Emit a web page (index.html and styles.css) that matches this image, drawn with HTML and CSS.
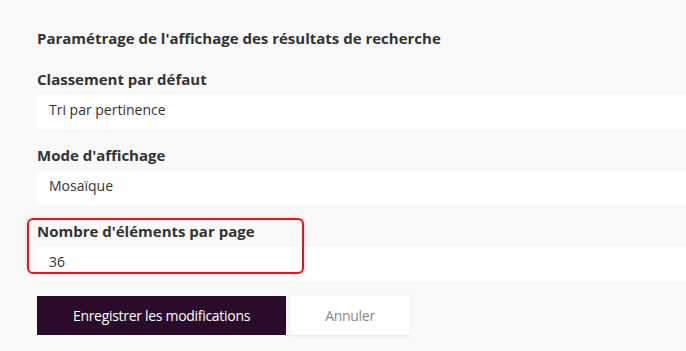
FILE: index.html
```html
<!DOCTYPE html>
<html lang="fr">
<head>
<meta charset="utf-8">
<link rel="stylesheet" href="styles.css">
</head>
<body>
<div class="panel">
  <h2 class="title">Paramétrage de l'affichage des résultats de recherche</h2>
  <div class="group">
    <div class="label">Classement par défaut</div>
    <div class="field">Tri par pertinence</div>
  </div>
  <div class="group">
    <div class="label">Mode d'affichage</div>
    <div class="field">Mosaïque</div>
  </div>
  <div class="group highlighted">
    <div class="label">Nombre d'éléments par page</div>
    <div class="field">36</div>
    <div class="marker"></div>
  </div>
  <div class="actions">
    <button class="btn btn-primary">Enregistrer les modifications</button>
    <button class="btn btn-secondary">Annuler</button>
  </div>
</div>
</body>
</html>
```
FILE: styles.css
```css
html, body {
  margin: 0;
  padding: 0;
  background: #f9f9f9;
}
body {
  font-family: "Open Sans", "Noto Sans", sans-serif;
  color: #333;
  width: 686px;
  height: 351px;
  overflow: hidden;
}
.panel {
  padding: 28px 0 0 37px;
}
.title {
  margin: 0;
  font-size: 15px;
  line-height: 20px;
  font-weight: 700;
  color: #333;
}
.group {
  position: relative;
  margin-top: 21px;
}
.group + .group {
  margin-top: 16px;
}
.label {
  font-size: 15px;
  line-height: 20px;
  font-weight: 700;
  color: #333;
}
.field {
  box-sizing: border-box;
  margin-top: 6px;
  height: 34px;
  line-height: 29px;
  background: #fff;
  padding-left: 12px;
  font-size: 14px;
  color: #333;
}
.marker {
  position: absolute;
  left: -10px;
  top: -3px;
  width: 273px;
  height: 52px;
  border: 2px solid #e8141b;
  border-radius: 6px;
  box-shadow: 0 0 4px rgba(0,0,0,0.15);
  pointer-events: none;
}
.actions {
  display: flex;
  gap: 4px;
  margin-top: 15px;
}
.btn {
  font-family: "Open Sans", "Noto Sans", sans-serif;
  font-size: 14px;
  height: 39px;
  border: 0;
  padding: 0;
  letter-spacing: -0.3px;
}
.btn-primary {
  width: 249px;
  background: #2a0b2a;
  color: #fff;
}
.btn-secondary {
  width: 120px;
  background: #fff;
  color: #888;
  box-shadow: 0 1px 2px rgba(0,0,0,0.08);
}
```
